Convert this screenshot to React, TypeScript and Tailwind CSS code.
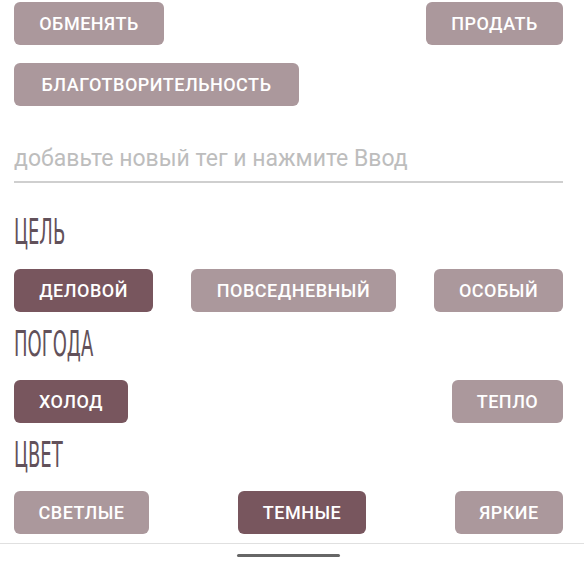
import React from "react";

const light = "bg-[#ab989c]";
const dark = "bg-[#78565e]";

function Btn({ label, active = false, w }: { label: string; active?: boolean; w: string }) {
  return (
    <div
      className={`${active ? dark : light} ${w} h-[43px] rounded-[6px] flex items-center justify-center text-white text-[18px] font-medium tracking-[0.5px] shrink-0`}
      style={{ fontFamily: "Roboto, 'Noto Sans', sans-serif" }}
    >
      {label}
    </div>
  );
}

function Heading({ children }: { children: React.ReactNode }) {
  return (
    <div className="h-[36px] flex items-center overflow-visible">
      <span
        className="inline-block text-[#62515a] text-[36px] leading-none origin-left scale-x-[0.5] whitespace-nowrap"
        style={{ fontFamily: "'DejaVu Sans', sans-serif", fontWeight: 400 }}
      >
        {children}
      </span>
    </div>
  );
}

export default function App() {
  return (
    <div className="w-[584px] h-[565px] bg-white overflow-hidden flex flex-col">
      <div className="pl-[14px] pr-[21px] flex flex-col">
        <div className="flex justify-between pt-[2px]">
          <Btn label="ОБМЕНЯТЬ" w="w-[150px]" />
          <Btn label="ПРОДАТЬ" w="w-[137px]" />
        </div>
        <div className="flex pt-[18px]">
          <Btn label="БЛАГОТВОРИТЕЛЬНОСТЬ" w="w-[285px]" />
        </div>
        <div className="mt-[38px] h-[39px] border-b-2 border-[#cfcfcf] flex items-start">
          <span
            className="text-[23px] text-[#bdbdbd] leading-[30px]"
            style={{ fontFamily: "Roboto, 'Noto Sans', sans-serif" }}
          >
            добавьте новый тег и нажмите Ввод
          </span>
        </div>
        <div className="mt-[31px]">
          <Heading>ЦЕЛЬ</Heading>
        </div>
        <div className="flex justify-between mt-[19px]">
          <Btn label="ДЕЛОВОЙ" active w="w-[139px]" />
          <Btn label="ПОВСЕДНЕВНЫЙ" w="w-[205px]" />
          <Btn label="ОСОБЫЙ" w="w-[129px]" />
        </div>
        <div className="mt-[14px]">
          <Heading>ПОГОДА</Heading>
        </div>
        <div className="flex justify-between mt-[18px]">
          <Btn label="ХОЛОД" active w="w-[114px]" />
          <Btn label="ТЕПЛО" w="w-[111px]" />
        </div>
        <div className="mt-[14px]">
          <Heading>ЦВЕТ</Heading>
        </div>
        <div className="flex justify-between mt-[18px]">
          <Btn label="СВЕТЛЫЕ" w="w-[135px]" />
          <Btn label="ТЕМНЫЕ" active w="w-[128px]" />
          <Btn label="ЯРКИЕ" w="w-[108px]" />
        </div>
      </div>
      <div className="mt-[9px] h-[1px] bg-[#e0e0e0] w-full" />
      <div className="flex mt-[10px] pl-[237px]">
        <div className="w-[103px] h-[3px] bg-[#666] rounded-full" />
      </div>
    </div>
  );
}
